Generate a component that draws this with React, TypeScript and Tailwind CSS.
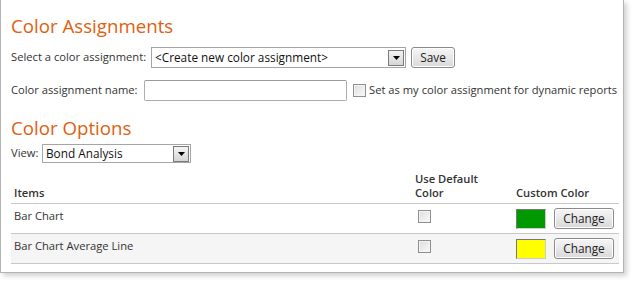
import React from 'react'

const font = { fontFamily: '"Open Sans", "Noto Sans", sans-serif' }

function Arrow() {
  return (
    <div className="w-[16px] h-[16px] border border-[#7a7a7a] bg-gradient-to-b from-[#f4f4f4] to-[#d6d6d6] flex items-center justify-center">
      <svg width="7" height="4" viewBox="0 0 7 4">
        <path d="M0 0 L7 0 L3.5 4 Z" fill="#000" />
      </svg>
    </div>
  )
}

function Select({ value, width }: { value: string; width: string }) {
  return (
    <div className={`${width} h-full border border-[#a5a5a5] bg-white flex items-center justify-between pl-[3px] pr-[1px]`}>
      <span className="text-[11.8px] text-[#111] whitespace-nowrap">{value}</span>
      <Arrow />
    </div>
  )
}

function Button({ label, width }: { label: string; width: string }) {
  return (
    <div className={`${width} h-[21px] rounded-[3px] border border-[#8a8a8a] bg-gradient-to-b from-[#f6f6f6] via-[#e8e8e8] to-[#d9d9d9] flex items-center justify-center text-[11.8px] text-[#222] shadow-[inset_0_0_0_1px_#fff]`}>
      {label}
    </div>
  )
}

function Checkbox() {
  return (
    <div className="w-[13px] h-[13px] border border-[#8e8f8f] bg-gradient-to-br from-[#dcdcdc] to-[#fbfbfb] shadow-[inset_0_0_0_1px_#f4f4f4]" />
  )
}

const rows = [
  { name: 'Bar Chart', color: 'bg-[#009900]', bg: 'bg-white' },
  { name: 'Bar Chart Average Line', color: 'bg-[#ffff00]', bg: 'bg-[#f5f5f5]' },
]

export default function App() {
  return (
    <div className="w-[634px] h-[283px] bg-white text-[#333] text-[11.2px] whitespace-nowrap" style={font}>
      <div className="w-[624px] h-[273px] border-l border-r border-b border-[#b4b4b4] shadow-[3px_3px_5px_rgba(0,0,0,0.18)] pt-[12px] pl-[10px]">
        <h1 className="h-[28px] leading-[28px] text-[18.7px] text-[#e0600f]">Color Assignments</h1>

        <div className="mt-[7px] h-[21px] flex items-center">
          <span className="w-[140px] shrink-0">Select a color assignment:</span>
          <div className="h-[21px] flex">
            <Select value="<Create new color assignment>" width="w-[255px]" />
          </div>
          <div className="ml-[5px]">
            <Button label="Save" width="w-[44px]" />
          </div>
        </div>

        <div className="mt-[12px] h-[21px] flex items-center">
          <span className="w-[133px] shrink-0">Color assignment name:</span>
          <div className="w-[203px] h-[21px] shrink-0 border border-[#abadb3] border-t-[#9a9a9a] rounded-[2px] bg-white" />
          <div className="ml-[6px]">
            <Checkbox />
          </div>
          <span className="ml-[3px]">Set as my color assignment for dynamic reports</span>
        </div>

        <h2 className="mt-[13px] h-[28px] leading-[28px] text-[18.7px] text-[#e0600f]">Color Options</h2>

        <div className="mt-[2px] h-[19px] flex items-center">
          <span className="w-[31px] shrink-0">View:</span>
          <div className="h-[19px] flex">
            <Select value="Bond Analysis" width="w-[149px]" />
          </div>
        </div>

        <div className="w-[608px]">
          <div className="h-[41px] flex items-end pb-[3px] border-b border-[#c8c8c8] font-semibold leading-[14px]">
            <div className="w-[404px] pl-[3px]">Items</div>
            <div className="w-[101px]">Use Default<br />Color</div>
            <div>Custom Color</div>
          </div>
          {rows.map((r) => (
            <div key={r.name} className={`h-[30px] flex items-center border-b border-[#c8c8c8] ${r.bg}`}>
              <div className="w-[404px] pl-[3px] self-start pt-[4px]">{r.name}</div>
              <div className="w-[101px] pl-[3px] self-start pt-[6px]">
                <Checkbox />
              </div>
              <div className={`w-[30px] h-[20px] border border-[#777] border-r-[#ccc] border-b-[#ccc] ${r.color}`} />
              <div className="ml-[8px]">
                <Button label="Change" width="w-[60px]" />
              </div>
            </div>
          ))}
        </div>
      </div>
    </div>
  )
}
